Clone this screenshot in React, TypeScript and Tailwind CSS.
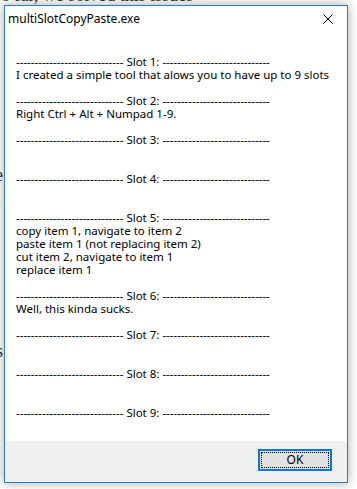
import React from "react";

const dash = "-----------------------------";
const slot = (n: number) => `${dash} Slot ${n}: ${dash}`;

const lines: string[] = [
  slot(1),
  "I created a simple tool that alows you to have up to 9 slots",
  "",
  slot(2),
  "Right Ctrl + Alt + Numpad 1-9.",
  "",
  slot(3),
  "",
  "",
  slot(4),
  "",
  "",
  slot(5),
  "copy item 1, navigate to item 2",
  "paste item 1 (not replacing item 2)",
  "cut item 2, navigate to item 1",
  "replace item 1",
  "",
  slot(6),
  "Well, this kinda sucks.",
  "",
  slot(7),
  "",
  "",
  slot(8),
  "",
  "",
  slot(9),
];

export default function App() {
  return (
    <div className="relative w-[357px] h-[489px] overflow-hidden bg-white">
      {/* page behind the message box */}
      <div className="font-['Liberation_Serif',serif] text-[18px] leading-[20px] text-[#333]">
        <div className="mt-[-15px] ml-[-9px] whitespace-nowrap">So far, we solved this issues</div>
        <div className="mt-[160px] ml-[-5px]">e</div>
        <div className="ml-[-5px]">l</div>
        <div className="mt-[136px] ml-[-4px]">s</div>
      </div>

      <div className="absolute left-[4px] top-[5px] w-[344px] h-[478px] flex flex-col border border-[#2b7ec8] bg-white shadow-[0_0_10px_rgba(0,0,0,0.35)] font-['Noto_Sans',sans-serif] text-black">
        <div className="h-[25px] flex items-center justify-between pl-[3px] pr-[14px] text-[12px]">
          <span>multiSlotCopyPaste.exe</span>
          <svg width="10" height="10" viewBox="0 0 10 10">
            <path d="M0.5 0.5 L9.5 9.5 M9.5 0.5 L0.5 9.5" stroke="#000" strokeWidth="1" fill="none" />
          </svg>
        </div>
        <div className="flex-1 pt-[24px] pl-[11px] text-[11.5px] leading-[13px]">
          {lines.map((l, i) => (
            <div key={i} className="h-[13px] whitespace-pre">
              {l}
            </div>
          ))}
        </div>
        <div className="h-[41px] bg-[#f0f0f0] flex justify-end items-start pt-[8px] pr-[15px]">
          <div className="w-[74px] h-[22px] bg-[#e1e1e1] border-2 border-[#0078d7] p-[1px]">
            <div className="w-full h-full border border-dotted border-black flex items-center justify-center text-[12px]">
              OK
            </div>
          </div>
        </div>
      </div>
    </div>
  );
}
